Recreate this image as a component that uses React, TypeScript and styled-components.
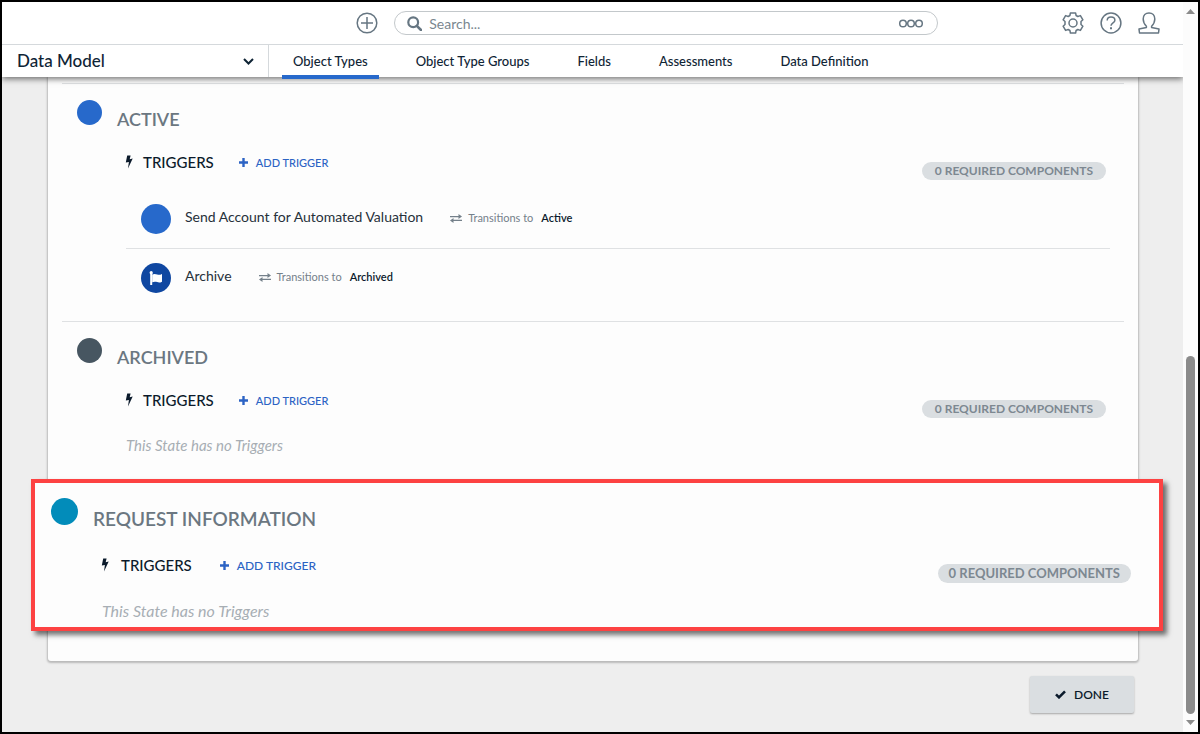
import React from "react";
import styled, { createGlobalStyle } from "styled-components";

const GlobalStyle = createGlobalStyle`
  *, *::before, *::after { box-sizing: border-box; }
  body { margin: 0; background: #eee; }
  body, button, input, select {
    font-family: Lato, "Open Sans", sans-serif;
  }
  h2, h3, p, ul { margin: 0; padding: 0; }
  ul { list-style: none; }
  svg { display: block; flex: none; }
`;

const Frame = styled.div`
  display: flex;
  min-height: 100vh;
  border: 2px solid #000;
  background: #eee;
`;

const Page = styled.div`
  flex: 1;
  min-width: 0;
`;

const Header = styled.header`
  position: relative;
  z-index: 2;
  background: #fff;
  box-shadow: 0 2px 6px rgba(0, 0, 0, 0.55);
  clip-path: inset(0 0 -12px 0);
`;

const TopBar = styled.div`
  display: flex;
  align-items: center;
  height: 43px;
  padding: 0 23px 0 30%;
  border-bottom: 1px solid #d5d9dc;
`;

const IconButton = styled.button`
  flex: none;
  padding: 0;
  border: 0;
  background: none;
  color: #667682;
  cursor: pointer;
`;

const SearchBox = styled.label`
  display: flex;
  align-items: center;
  gap: 7px;
  flex: 0 1 544px;
  height: 24px;
  margin-left: 16px;
  padding: 0 13px 0 12px;
  border: 1px solid #c3c8cb;
  border-radius: 12px;
  color: #667682;
`;

const SearchInput = styled.input`
  flex: 1;
  min-width: 0;
  padding: 0;
  border: 0;
  outline: 0;
  background: none;
  font-size: 14px;
  color: #667682;
  &::placeholder { color: #7a8790; opacity: 1; }
`;

const Tools = styled.div`
  display: flex;
  gap: 16px;
  margin-left: auto;
`;

const NavBar = styled.nav`
  display: flex;
  height: 32px;
`;

const AreaPicker = styled.label`
  position: relative;
  display: block;
  width: 267px;
  border-right: 1px solid #d5d9dc;
  color: #0f2435;
`;

const AreaSelect = styled.select`
  appearance: none;
  width: 100%;
  height: 30px;
  padding: 0 40px 0 15px;
  border: 0;
  background: none;
  font-size: 17px;
  font-weight: 500;
  color: inherit;
`;

const AreaArrow = styled.span`
  position: absolute;
  right: 14px;
  top: 13px;
  pointer-events: none;
`;

const Tabs = styled.div`
  display: flex;
  gap: 26px;
  margin-left: 13px;
`;

const Tab = styled.a<{ $active?: boolean }>`
  height: 34px;
  padding: 0 11px;
  border-bottom: 4px solid ${(p) => (p.$active ? "#2769cb" : "transparent")};
  font-size: 13px;
  font-weight: 500;
  line-height: 33px;
  white-space: nowrap;
  color: #0f2435;
  text-decoration: none;
`;

const Content = styled.main`
  padding: 0 45px 18px 46px;
`;

const Card = styled.div`
  padding: 6px 14px 30px;
  border-radius: 0 0 3px 3px;
  background: #fdfdfd;
  box-shadow: 0 1px 2px 1px rgba(0, 0, 0, 0.22);
`;

const Section = styled.section<{ $highlight?: boolean }>`
  display: flex;
  align-items: flex-start;
  gap: 15px;
  ${(p) =>
    p.$highlight
      ? `
    position: relative;
    margin: 0 -39px 0 -31px;
    padding: 15px 24px 6px 16px;
    border: 4px solid #fd4242;
    background: #fdfdfd;
    box-shadow: 4px 4px 5px rgba(0, 0, 0, 0.55);
  `
      : `
    padding: 16px 14px 14px 15px;
    border-top: 1px solid #dfe1e3;
  `}
`;

const StateDot = styled.span<{ $color: string; $large?: boolean }>`
  flex: none;
  width: ${(p) => (p.$large ? 27 : 25)}px;
  height: ${(p) => (p.$large ? 27 : 25)}px;
  border-radius: 50%;
  background: ${(p) => p.$color};
`;

const SectionBody = styled.div`
  flex: 1;
  min-width: 0;
  padding-top: 7px;
`;

const StateName = styled.h2<{ $large?: boolean }>`
  font-size: ${(p) => (p.$large ? 19 : 18)}px;
  font-weight: 600;
  line-height: ${(p) => (p.$large ? 28 : 24)}px;
  color: #6b7781;
`;

const TriggerBar = styled.div<{ $large?: boolean }>`
  display: flex;
  align-items: flex-start;
  height: 28px;
  margin-top: ${(p) => (p.$large ? 22 : 21)}px;
  padding: 0 4px 0 8px;
`;

const TriggerTitle = styled.h3<{ $large?: boolean }>`
  display: flex;
  align-items: center;
  gap: ${(p) => (p.$large ? 12 : 10)}px;
  font-size: 15px;
  font-weight: 500;
  line-height: 20px;
  color: #0b1a2b;
`;

const AddButton = styled.button<{ $large?: boolean }>`
  display: flex;
  align-items: center;
  gap: 8px;
  height: 20px;
  margin-left: ${(p) => (p.$large ? 28 : 25)}px;
  padding: 0;
  border: 0;
  background: none;
  font-size: ${(p) => (p.$large ? 12 : 11)}px;
  font-weight: 500;
  color: #2c63c4;
  cursor: pointer;
`;

const Badge = styled.span<{ $large?: boolean }>`
  align-self: flex-end;
  margin-left: auto;
  padding: 0 ${(p) => (p.$large ? 11 : 13)}px;
  border-radius: 10px;
  background: #dadee1;
  font-size: ${(p) => (p.$large ? 13 : 12)}px;
  font-weight: 700;
  line-height: ${(p) => (p.$large ? 19 : 18)}px;
  color: #7d8891;
`;

const TriggerList = styled.ul`
  margin: 10px 0 0 9px;
`;

const TriggerItem = styled.li`
  display: flex;
  align-items: flex-start;
  padding: 14px 15px;
  & + & { border-top: 1px solid #dfe1e3; }
`;

const TriggerIcon = styled.span<{ $color: string }>`
  display: grid;
  place-items: center;
  width: 30px;
  height: 30px;
  margin-right: 14px;
  border-radius: 50%;
  background: ${(p) => p.$color};
  color: #fff;
`;

const TriggerName = styled.span`
  font-size: 14px;
  line-height: 26px;
  color: #26303a;
`;

const Transition = styled.span`
  display: flex;
  align-items: center;
  gap: 6px;
  margin-left: 27px;
  font-size: 11px;
  line-height: 28px;
  color: #74808a;
`;

const Target = styled.strong`
  margin-left: 2px;
  font-weight: 600;
  color: #0b1a2b;
`;

const Empty = styled.p<{ $large?: boolean }>`
  margin-top: ${(p) => (p.$large ? 18 : 17)}px;
  padding: 0 0 ${(p) => (p.$large ? 0 : 10)}px 9px;
  font-size: ${(p) => (p.$large ? 16 : 15)}px;
  font-style: italic;
  line-height: 20px;
  color: #a7aeb4;
`;

const Actions = styled.div`
  display: flex;
  justify-content: flex-end;
  padding: 15px 4px 0;
`;

const DoneButton = styled.button`
  display: flex;
  align-items: center;
  justify-content: center;
  gap: 8px;
  width: 104px;
  height: 37px;
  padding: 0;
  border: 0;
  border-radius: 2px;
  background: #dadee1;
  box-shadow: 0 1px 2px rgba(0, 0, 0, 0.3);
  font-size: 12px;
  font-weight: 600;
  color: #0b1a2b;
  cursor: pointer;
`;

const ScrollTrack = styled.div`
  display: flex;
  flex-direction: column;
  align-items: center;
  flex: 0 0 15px;
  padding: 7px 0;
  background: #fcfcfc;
  color: #8b8b8b;
`;

const ScrollGap = styled.div`
  flex: 342;
`;

const ScrollThumb = styled.div`
  flex: 358;
  width: 9px;
  margin-bottom: 6px;
  border-radius: 5px;
  background: #8b8b8b;
`;

const stroke = { fill: "none", stroke: "currentColor", strokeWidth: 1.5 };

const PlusCircle = () => (
  <svg width="22" height="22" viewBox="0 0 22 22" {...stroke}>
    <circle cx="11" cy="11" r="9.8" />
    <path d="M11 5v12M5 11h12" />
  </svg>
);

const Magnifier = () => (
  <svg width="15" height="15" viewBox="0 0 15 15" fill="none" stroke="currentColor">
    <circle cx="6.2" cy="6.2" r="4.9" strokeWidth="2.2" />
    <path d="M9.8 9.8l4.2 4.2" strokeWidth="2.6" strokeLinecap="round" />
  </svg>
);

const Dots = () => (
  <svg width="26" height="10" viewBox="0 0 26 10" {...stroke}>
    <circle cx="5" cy="5.5" r="3.3" />
    <circle cx="13" cy="5.5" r="3.3" />
    <circle cx="21" cy="5.5" r="3.3" />
  </svg>
);

const Gear = () => (
  <svg width="22" height="22" viewBox="0 0 22 22" {...stroke} strokeLinejoin="round">
    <path d="M8.4 1h5.200l.5 2.500 1.700 1 2.600-.9 2.500 4.200-1.900 1.700v3l1.900 1.700-2.500 4.200-2.600-.9-1.700 1-.5 2.500H8.400l-.5-2.500-1.700-1-2.600.9-2.500-4.200L3 12.500v-3L1.100 7.800l2.500-4.200 2.600.9 1.700-1z" />
    <circle cx="11" cy="11" r="4" />
  </svg>
);

const Help = () => (
  <svg width="22" height="22" viewBox="0 0 22 22" {...stroke}>
    <circle cx="11" cy="11" r="9.9" />
    <path d="M7.200 8.600c0-2.200 1.600-3.500 3.800-3.500s3.900 1.300 3.900 3.200c0 2.700-3.900 2.600-3.900 5.500" />
    <path d="M11 15.200v2" strokeWidth="2" />
  </svg>
);

const Person = () => (
  <svg width="22" height="22" viewBox="0 0 22 22" {...stroke} strokeLinejoin="round">
    <path d="M8.400 14.200C6.400 12.200 5.200 9.600 5.200 7 5.200 3.300 7.600 1 11 1s5.800 2.300 5.800 6c0 2.600-1.200 5.200-3.200 7.200v1.200l7.400 1.700L20.500 21h-19L1 17.100l7.400-1.700z" />
  </svg>
);

const Chevron = () => (
  <svg width="11" height="7" viewBox="0 0 11 7" fill="none" stroke="currentColor" strokeWidth="2">
    <path d="M1 1l4.500 4.500L10 1" />
  </svg>
);

const Bolt = () => (
  <svg width="8" height="14" viewBox="0 0 8 14" fill="currentColor">
    <path d="M2.200 0.500H5.600L4.700 4.300L7.700 3.600L3 13.500L3.900 6.900L0.800 7.600Z" />
  </svg>
);

const Plus = () => (
  <svg width="9" height="9" viewBox="0 0 9 9" fill="none" stroke="currentColor" strokeWidth="2.4">
    <path d="M4.500 0v9M0 4.500h9" />
  </svg>
);

const Swap = () => (
  <svg width="12" height="9" viewBox="0 0 12 9" fill="currentColor">
    <path d="M0 2h8.500V0L12 2.600 8.500 5V3.200H0zM12 5.800H3.500V4L0 6.500 3.500 9V7H12z" />
  </svg>
);

const Flag = () => (
  <svg width="14" height="14" viewBox="0 0 14 14" fill="currentColor">
    <circle cx="2.200" cy="1.700" r="1.600" />
    <path d="M1.200 2h2v12h-2z" />
    <path d="M3.200 3.500c1.700-.8 3.500-.6 5 0 1.500.6 2.900.5 4.800-.6v7.800c-2 1.100-3.400 1-4.900.4-1.500-.6-3.300-.6-4.900.2z" />
  </svg>
);

const Check = () => (
  <svg width="11" height="9" viewBox="0 0 11 9" fill="none" stroke="currentColor" strokeWidth="2.6">
    <path d="M1 4.300l3 3L10 1.300" />
  </svg>
);

const Triangle = ({ down }: { down?: boolean }) => (
  <svg width="9" height="5" viewBox="0 0 9 5" fill="currentColor">
    <path d={down ? "M0 0h9L4.500 5z" : "M0 5h9L4.500 0z"} />
  </svg>
);

interface Trigger {
  name: string;
  target: string;
  color: string;
  icon?: React.ReactNode;
}

interface StateProps {
  name: string;
  color: string;
  highlight?: boolean;
  triggers?: Trigger[];
}

function WorkflowState({ name, color, highlight, triggers = [] }: StateProps) {
  return (
    <Section $highlight={highlight}>
      <StateDot $color={color} $large={highlight} />
      <SectionBody>
        <StateName $large={highlight}>{name}</StateName>
        <TriggerBar $large={highlight}>
          <TriggerTitle $large={highlight}>
            <Bolt />
            TRIGGERS
          </TriggerTitle>
          <AddButton type="button" $large={highlight}>
            <Plus />
            ADD TRIGGER
          </AddButton>
          <Badge $large={highlight}>0 REQUIRED COMPONENTS</Badge>
        </TriggerBar>
        {triggers.length > 0 ? (
          <TriggerList>
            {triggers.map((t) => (
              <TriggerItem key={t.name}>
                <TriggerIcon $color={t.color}>{t.icon}</TriggerIcon>
                <TriggerName>{t.name}</TriggerName>
                <Transition>
                  <Swap />
                  Transitions to
                  <Target>{t.target}</Target>
                </Transition>
              </TriggerItem>
            ))}
          </TriggerList>
        ) : (
          <Empty $large={highlight}>This State has no Triggers</Empty>
        )}
      </SectionBody>
    </Section>
  );
}

const tabs = ["Object Types", "Object Type Groups", "Fields", "Assessments", "Data Definition"];

export default function App() {
  return (
    <>
      <GlobalStyle />
      <Frame>
        <Page>
          <Header>
            <TopBar>
              <IconButton type="button" aria-label="Create">
                <PlusCircle />
              </IconButton>
              <SearchBox>
                <Magnifier />
                <SearchInput type="text" aria-label="Search" placeholder="Search..." />
                <Dots />
              </SearchBox>
              <Tools>
                <IconButton type="button" aria-label="Settings"><Gear /></IconButton>
                <IconButton type="button" aria-label="Help"><Help /></IconButton>
                <IconButton type="button" aria-label="Profile"><Person /></IconButton>
              </Tools>
            </TopBar>
            <NavBar>
              <AreaPicker>
                <AreaSelect aria-label="Area">
                  <option>Data Model</option>
                </AreaSelect>
                <AreaArrow><Chevron /></AreaArrow>
              </AreaPicker>
              <Tabs>
                {tabs.map((t, i) => (
                  <Tab key={t} href="#" $active={i === 0}>{t}</Tab>
                ))}
              </Tabs>
            </NavBar>
          </Header>
          <Content>
            <Card>
              <WorkflowState
                name="ACTIVE"
                color="#2769cb"
                triggers={[
                  { name: "Send Account for Automated Valuation", target: "Active", color: "#2769cb" },
                  { name: "Archive", target: "Archived", color: "#0f47a1", icon: <Flag /> },
                ]}
              />
              <WorkflowState name="ARCHIVED" color="#475661" />
              <WorkflowState name="REQUEST INFORMATION" color="#028cba" highlight />
            </Card>
            <Actions>
              <DoneButton type="button">
                <Check />
                DONE
              </DoneButton>
            </Actions>
          </Content>
        </Page>
        <ScrollTrack aria-hidden="true">
          <Triangle />
          <ScrollGap />
          <ScrollThumb />
          <Triangle down />
        </ScrollTrack>
      </Frame>
    </>
  );
}
